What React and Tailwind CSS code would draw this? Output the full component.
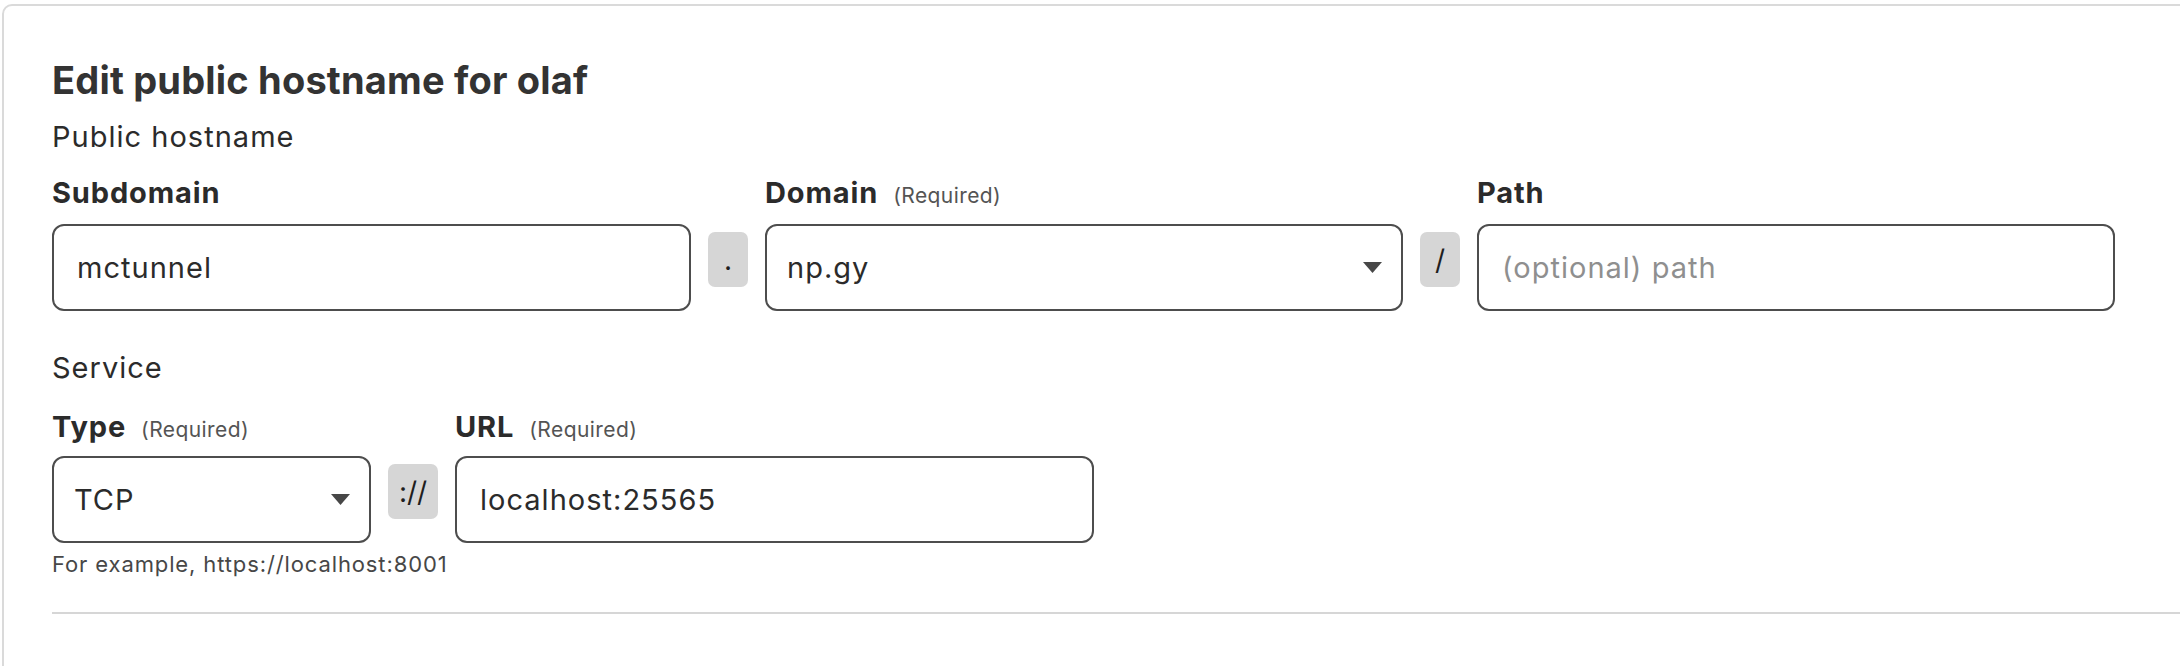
import { useState } from 'react';

const Caret = () => (
    <svg width="19" height="11" viewBox="0 0 19 11" className="shrink-0">
        <path d="M0 0 H19 L9.5 11 Z" fill="#474747" />
    </svg>
);

const Addon = ({ children, w = 'w-[40px]' }) => (
    <div
        className={`${w} h-[55px] mt-[8px] rounded-[7px] bg-[#d6d6d6] flex items-center justify-center text-[28px] text-[#1f1f1f] self-start`}
    >
        {children}
    </div>
);

const Label = ({ children, required }) => (
    <div className="flex items-baseline h-[34px]">
        <span className="text-[29px] leading-[34px] font-bold text-[#2b2b2b] tracking-[0.03em]">{children}</span>
        {required && <span className="ml-[15px] text-[21px] tracking-[0.02em] text-[#545454]">(Required)</span>}
    </div>
);

const TextInput = ({ value, placeholder }) => {
    const [val, setVal] = useState(value || '');
    return (
        <input
            value={val}
            onChange={(e) => setVal(e.target.value)}
            placeholder={placeholder}
            className="w-full h-[87px] rounded-[12px] border-2 border-[#4d4d4d] bg-white px-[23px] text-[29px] tracking-[0.035em] text-[#2b2b2b] placeholder:text-[#8f8f8f] outline-none"
        />
    );
};

const Select = ({ value }) => (
    <div className="w-full h-[87px] rounded-[12px] border-2 border-[#4d4d4d] bg-white pl-[20px] pr-[19px] flex items-center justify-between text-[29px] tracking-[0.035em] text-[#2b2b2b]">
        <span>{value}</span>
        <Caret />
    </div>
);

const App = () => (
    <div
        className="min-h-screen bg-white overflow-hidden pl-[2px] pt-[4px]"
        style={{ fontFamily: 'Inter, "Noto Sans", sans-serif' }}
    >
        <div className="w-[2240px] min-h-[720px] border-2 border-[#dadada] rounded-[10px] pl-[48px] pt-[51px]">
            <h1 className="text-[38px] leading-[46px] font-bold text-[#333333] tracking-[0.005em]">
                Edit public hostname for olaf
            </h1>
            <div className="mt-[17px] text-[29px] leading-[34px] tracking-[0.035em] text-[#2b2b2b]">Public hostname</div>

            <div className="mt-[22px] grid grid-cols-[639px_40px_638px_40px_638px] gap-x-[17px] gap-y-[14px]">
                <Label>Subdomain</Label>
                <div />
                <Label required>Domain</Label>
                <div />
                <Label>Path</Label>

                <TextInput value="mctunnel" />
                <Addon>.</Addon>
                <Select value="np.gy" />
                <Addon>/</Addon>
                <TextInput placeholder="(optional) path" />
            </div>

            <div className="mt-[40px] text-[29px] leading-[34px] tracking-[0.035em] text-[#2b2b2b]">Service</div>

            <div className="mt-[25px] grid grid-cols-[319px_50px_639px] gap-x-[17px] gap-y-[12px]">
                <Label required>Type</Label>
                <div />
                <Label required>URL</Label>

                <Select value="TCP" />
                <Addon w="w-[50px]">://</Addon>
                <TextInput value="localhost:25565" />
            </div>

            <p className="mt-[9px] text-[22px] leading-[24px] tracking-[0.04em] text-[#474747]">
                For example, https://localhost:8001
            </p>

            <div className="mt-[36px] h-[2px] bg-[#d6d6d6]" />
        </div>
    </div>
);

export default App;
